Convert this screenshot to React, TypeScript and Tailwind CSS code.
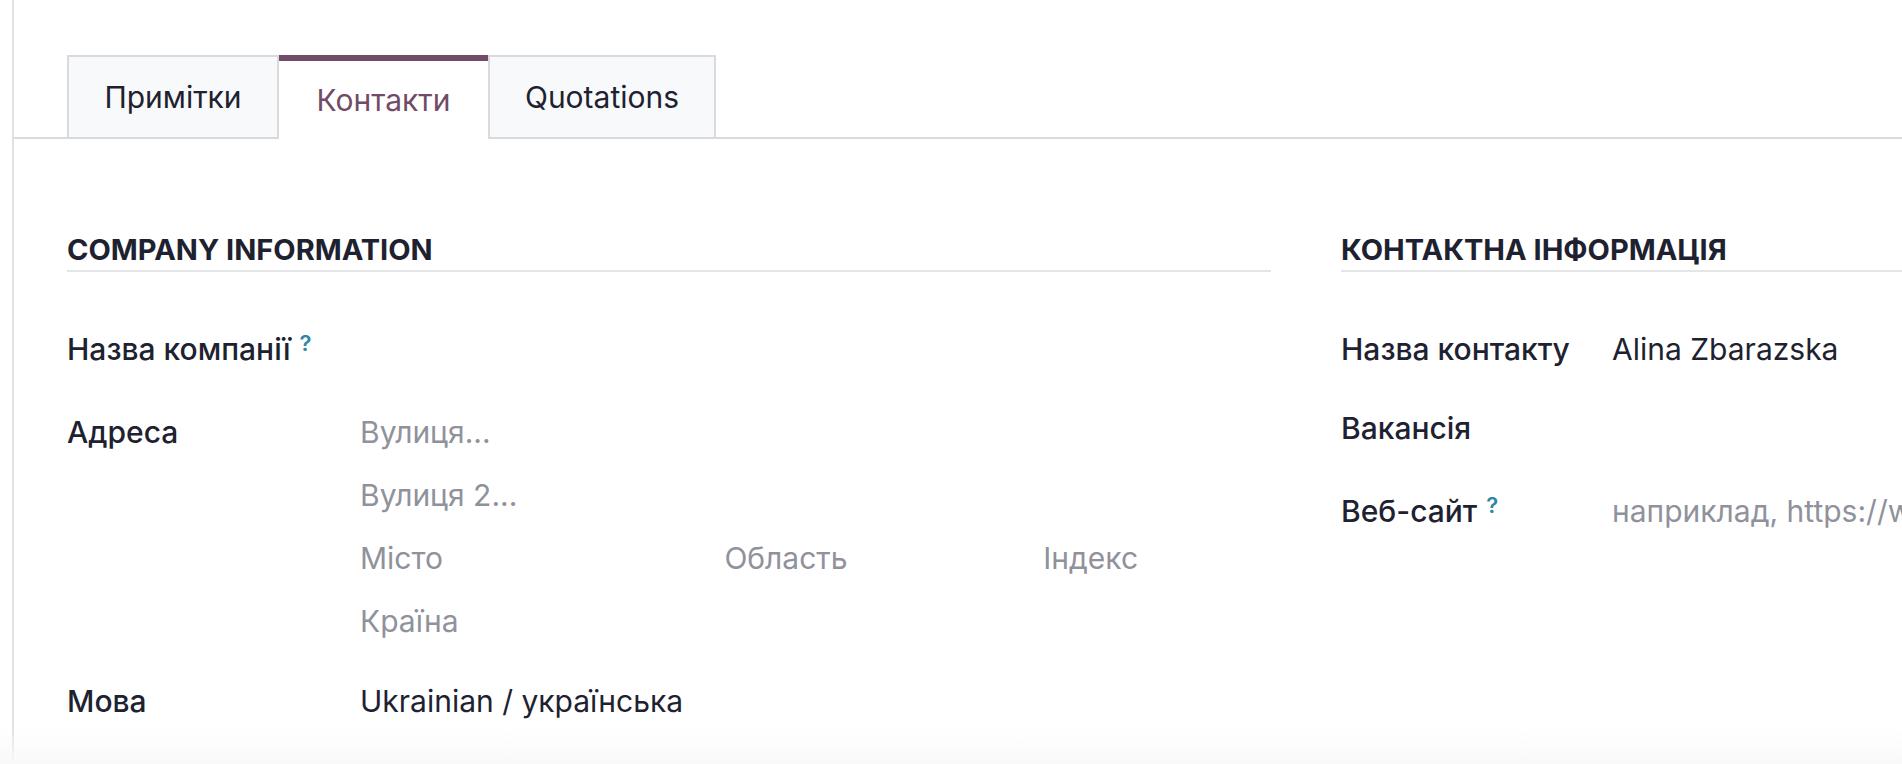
import React from "react";

const tabs = [
  { label: "Примітки", width: "w-[212px]", active: false },
  { label: "Контакти", width: "w-[209px]", active: true },
  { label: "Quotations", width: "w-[228px]", active: false },
];

const Help = () => (
  <sup className="relative -top-[9px] ml-[9px] text-[22px] font-semibold text-[#2f86a6]">?</sup>
);

const Placeholder = ({ children }: { children: React.ReactNode }) => (
  <span className="text-[#8f929b]">{children}</span>
);

const SectionTitle = ({ title }: { title: string }) => (
  <div className="border-b-2 border-[#e4e5e7] pb-[3px] text-[29px] font-bold uppercase leading-[34px] text-[#1e2230]">
    {title}
  </div>
);

const App = () => {
  return (
    <div className="relative h-[764px] w-full overflow-hidden bg-white font-['Inter','Noto_Sans',sans-serif] text-[30px] text-[#1e2230]">
      <div className="ml-3 h-full border-l-2 border-[#dfe1e4]">
        {/* Tabs */}
        <div className="pt-[55px]">
          <div className="flex border-b-2 border-[#d8dadd] pl-[53px]">
            {tabs.map((tab) => (
              <div
                key={tab.label}
                className={
                  tab.active
                    ? `${tab.width} -mb-[2px] flex h-[84px] items-center justify-center border-t-[6px] border-[#714b67] bg-white text-[#714b67]`
                    : `${tab.width} -mb-[2px] flex h-[84px] items-center justify-center border-2 border-[#d8dadd] bg-[#f8f9fa]`
                }
              >
                {tab.label}
              </div>
            ))}
          </div>
        </div>

        {/* Sheet */}
        <div className="flex gap-[70px] pl-[53px] pt-[94px] leading-[40px]">
          {/* Company information */}
          <div className="w-[1204px] shrink-0">
            <SectionTitle title="Company Information" />

            <div className="mt-[57px] flex">
              <div className="w-[293px] shrink-0 font-medium">
                Назва компанії
                <Help />
              </div>
              <div className="flex-1" />
            </div>

            <div className="mt-[43px] flex">
              <div className="w-[293px] shrink-0 font-medium">Адреса</div>
              <div className="flex flex-1 flex-col gap-[23px]">
                <Placeholder>Вулиця...</Placeholder>
                <Placeholder>Вулиця 2...</Placeholder>
                <div className="flex">
                  <div className="mr-[2%] w-[38%]">
                    <Placeholder>Місто</Placeholder>
                  </div>
                  <div className="mr-[2%] w-[33%]">
                    <Placeholder>Область</Placeholder>
                  </div>
                  <div className="w-[25%]">
                    <Placeholder>Індекс</Placeholder>
                  </div>
                </div>
                <Placeholder>Країна</Placeholder>
              </div>
            </div>

            <div className="mt-[40px] flex">
              <div className="w-[293px] shrink-0 font-medium">Мова</div>
              <div className="flex-1">Ukrainian / українська</div>
            </div>
          </div>

          {/* Contact information */}
          <div className="w-[1204px] shrink-0">
            <SectionTitle title="Контактна інформація" />

            <div className="mt-[57px] flex">
              <div className="w-[271px] shrink-0 font-medium">Назва контакту</div>
              <div className="flex-1">Alina Zbarazska</div>
            </div>

            <div className="mt-[39px] flex">
              <div className="w-[271px] shrink-0 font-medium">Вакансія</div>
              <div className="flex-1" />
            </div>

            <div className="mt-[43px] flex">
              <div className="w-[271px] shrink-0 font-medium">
                Веб-сайт
                <Help />
              </div>
              <div className="flex-1">
                <Placeholder>наприклад, https://www.odoo.com</Placeholder>
              </div>
            </div>
          </div>
        </div>
      </div>

      {/* bottom fade */}
      <div className="pointer-events-none absolute inset-x-0 bottom-0 h-[36px] bg-gradient-to-b from-white/0 to-[#f9f9fa]" />
    </div>
  );
};

export default App;
